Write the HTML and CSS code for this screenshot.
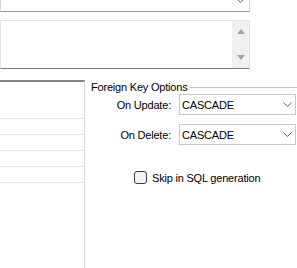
FILE: index.html
```html
<!DOCTYPE html>
<html lang="en">
<head>
  <meta charset="UTF-8">
  <title>Foreign Key</title>
  <link rel="stylesheet" href="styles.css">
</head>
<body>
  <div class="top">
    <div class="combo combo-top">
      <svg class="chev" viewBox="0 0 9 5"><polyline points="0.5,0.5 4.5,4.5 8.5,0.5"/></svg>
    </div>
    <div class="memo">
      <div class="memo-text"></div>
      <div class="scroll">
        <span class="arrow up"></span>
        <span class="arrow down"></span>
      </div>
    </div>
  </div>

  <div class="bottom">
    <div class="grid">
      <div class="grid-head"></div>
      <div class="grid-row"></div>
      <div class="grid-row"></div>
      <div class="grid-row"></div>
      <div class="grid-row"></div>
    </div>

    <div class="panel">
      <div class="legend">
        <span>Foreign Key Options</span>
        <span class="rule"></span>
      </div>
      <div class="fields">
        <label>On Update:</label>
        <div class="combo">CASCADE
          <svg class="chev" viewBox="0 0 9 5"><polyline points="0.5,0.5 4.5,4.5 8.5,0.5"/></svg>
        </div>
        <label>On Delete:</label>
        <div class="combo">CASCADE
          <svg class="chev" viewBox="0 0 9 5"><polyline points="0.5,0.5 4.5,4.5 8.5,0.5"/></svg>
        </div>
      </div>
      <label class="check"><span class="box"></span>Skip in SQL generation</label>
    </div>
  </div>
</body>
</html>
```

FILE: styles.css
```css
body {
  margin: 0;
  font-family: "Liberation Sans", Arial, sans-serif;
  font-size: 11px;
  letter-spacing: -0.2px;
  color: #000;
  background: #fff;
  overflow: hidden;
}
.top {
  margin-right: 47px;
}
.combo {
  box-sizing: border-box;
  height: 21px;
  border: 1px solid #c8c8c8;
  background: #fff;
  display: flex;
  align-items: center;
  justify-content: space-between;
  padding: 0 3px 0 2px;
}
.combo-top {
  height: 24px;
  margin-top: -12px;
  border-color: #d6d6d6;
  border-bottom-color: #9a9a9a;
  justify-content: flex-end;
  padding-right: 4px;
}
.chev {
  width: 9px;
  height: 5px;
  fill: none;
  stroke: #6a6a6a;
  stroke-width: 1;
}
.memo {
  box-sizing: border-box;
  height: 49px;
  margin-top: 8px;
  border: 1px solid #e3e3e3;
  border-bottom-color: #7a7a7a;
  display: flex;
}
.memo-text {
  flex: 1;
}
.scroll {
  width: 17px;
  background: #f0f0f0;
  display: flex;
  flex-direction: column;
  align-items: center;
  justify-content: space-between;
  padding: 8px 0 8px;
}
.arrow {
  width: 0;
  height: 0;
  border-left: 4px solid transparent;
  border-right: 4px solid transparent;
}
.arrow.up {
  border-bottom: 5px solid #a3a3a3;
}
.arrow.down {
  border-top: 5px solid #a3a3a3;
}
.bottom {
  display: flex;
  height: 188px;
  margin-top: 11px;
}
.grid {
  box-sizing: border-box;
  width: 85px;
  border-top: 2px solid #868686;
  border-right: 1px solid #dadada;
}
.grid-head {
  height: 36px;
  border-bottom: 1px solid #e6e6e6;
}
.grid-row {
  height: 15px;
  border-bottom: 1px solid #e6e6e6;
}
.panel {
  flex: 1;
  padding-left: 6px;
}
.legend {
  display: flex;
  align-items: center;
  height: 14px;
  line-height: 13px;
}
.rule {
  flex: 1;
  height: 1px;
  background: #c4c4c4;
  margin-left: 3px;
}
.fields {
  display: grid;
  grid-template-columns: 80px 117px;
  column-gap: 8px;
  row-gap: 9px;
  align-items: center;
}
.fields label {
  text-align: right;
}
.check {
  display: flex;
  align-items: center;
  gap: 5px;
  margin: 26px 0 0 43px;
}
.box {
  box-sizing: border-box;
  width: 13px;
  height: 13px;
  border: 1px solid #3c3c3c;
  border-radius: 3px;
  background: #f2f2f2;
}
```
